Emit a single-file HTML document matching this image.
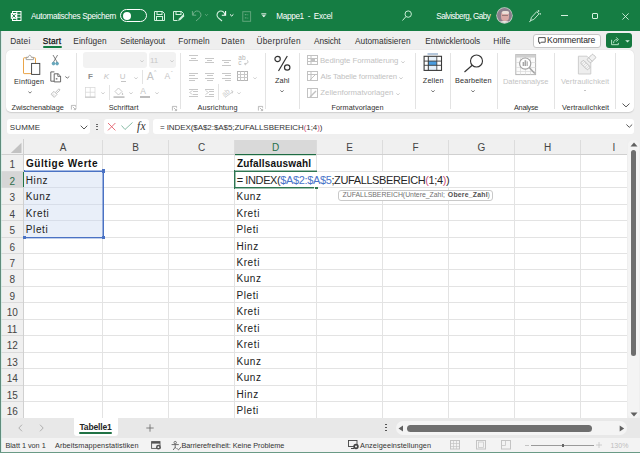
<!DOCTYPE html>
<html><head><meta charset="utf-8"><style>
html,body{margin:0;padding:0;width:640px;height:453px;overflow:hidden;background:#efefef}
body{position:relative;font-family:"Liberation Sans", sans-serif}
.t{position:absolute;white-space:nowrap;font-family:"Liberation Sans", sans-serif}
svg{overflow:visible}
</style></head><body>
<div style="position:absolute;left:0px;top:0px;width:640px;height:453px;background:#efefef"></div>
<div style="position:absolute;left:0px;top:0px;width:640px;height:31px;background:#157d43"></div>
<svg style="position:absolute;left:10px;top:10px;" width="12" height="12" viewBox="0 0 12 12"><rect x="2.5" y="1.5" width="8.5" height="9" fill="none" stroke="#fff" stroke-width="1"/><line x1="6.8" y1="1.5" x2="6.8" y2="10.5" stroke="#fff"/><line x1="2.5" y1="4.3" x2="11" y2="4.3" stroke="#fff" stroke-width="0.8"/><line x1="2.5" y1="7.3" x2="11" y2="7.3" stroke="#fff" stroke-width="0.8"/><rect x="0.8" y="3" width="6.2" height="5.8" fill="#fff"/><path d="M2.3 4.2l3.2 3.4M5.5 4.2l-3.2 3.4" stroke="#157d43" stroke-width="1"/></svg>
<div class="t" style="left:31.00px;top:11.74px;font-size:8.2px;line-height:9.43px;color:#fff;font-weight:normal;letter-spacing:-0.339px;">Automatisches Speichern</div>
<div style="position:absolute;left:120px;top:9px;width:27px;height:13px;border:1px solid #fff;border-radius:7px;box-sizing:border-box"></div>
<div style="position:absolute;left:123px;top:11.5px;width:8px;height:8px;background:#fff;border-radius:50%"></div>
<svg style="position:absolute;left:153px;top:10px;" width="13" height="12" viewBox="0 0 13 12"><path d="M1.5 1.5h8l2 2v7h-10z" fill="none" stroke="#d4f1df" stroke-width="1"/><rect x="4" y="1.5" width="5" height="3" fill="none" stroke="#d4f1df"/><rect x="3.5" y="6.5" width="6" height="4" fill="none" stroke="#d4f1df"/></svg>
<svg style="position:absolute;left:172px;top:10px;" width="13" height="12" viewBox="0 0 13 12"><path d="M1.5 1.5h8l2 2v3 M5.5 10.5h-4v-9" fill="none" stroke="#d4f1df" stroke-width="1"/><rect x="4" y="1.5" width="5" height="3" fill="none" stroke="#d4f1df"/><path d="M6 11l1-2.5 4-4 1.5 1.5-4 4z" fill="#d4f1df"/></svg>
<svg style="position:absolute;left:0;top:0" width="640" height="31" viewBox="0 0 640 31"><path d="M193.2 15 A3.9 3.9 0 1 1 199.9 17.6 L196 21" fill="none" stroke="#6cae87" stroke-width="1"/><path d="M192.4 11 V15.2 H196.2" fill="none" stroke="#6cae87" stroke-width="1"/><path d="M205.2 14.3 l1.3 1.3 1.3 -1.3" fill="none" stroke="#6cae87" stroke-width="0.9"/><path d="M224.8 15 A3.9 3.9 0 1 0 218.1 17.6 L222 21" fill="none" stroke="#d4f1df" stroke-width="1.1"/><path d="M225.6 11 V15.2 H221.8" fill="none" stroke="#fff" stroke-width="1.1"/><path d="M230 14.4 l1.7 1.6 1.7 -1.6" fill="none" stroke="#fff" stroke-width="1"/></svg>
<svg style="position:absolute;left:241.5px;top:10.5px;" width="10" height="11" viewBox="0 0 10 11"><rect x="0.8" y="0.7" width="7.8" height="9.6" fill="none" stroke="#5fa57b" stroke-width="1"/><path d="M2.8 3.6h1.6M2.8 6.9h1.6" stroke="#5fa57b" stroke-width="1.3"/><path d="M4.8 3.8h1.6M4.8 7.1h1.6" stroke="#5fa57b" stroke-width="0.7"/></svg>
<svg style="position:absolute;left:261px;top:13px;" width="6" height="5" viewBox="0 0 6 5"><line x1="0.3" y1="0.9" x2="5.3" y2="0.9" stroke="#fff" stroke-width="1"/><path d="M0.8 2.3h4l-2 2z" fill="#fff"/></svg>
<div class="t" style="left:276.34px;top:11.74px;font-size:8.2px;line-height:9.43px;color:#fff;font-weight:normal;letter-spacing:-0.354px;">Mappe1&nbsp; -&nbsp; Excel</div>
<svg style="position:absolute;left:401px;top:10px;" width="12" height="12" viewBox="0 0 12 12"><circle cx="7.2" cy="4.1" r="3.2" fill="none" stroke="#c8eed6" stroke-width="1"/><line x1="5" y1="6.5" x2="1.5" y2="10.5" stroke="#c8eed6" stroke-width="1"/></svg>
<div class="t" style="left:436.33px;top:11.74px;font-size:8.2px;line-height:9.43px;color:#fff;font-weight:normal;letter-spacing:-0.518px;">Salvisberg, Gaby</div>
<div style="position:absolute;left:496.8px;top:8.4px;width:15px;height:15px;border-radius:50%;background:#8a7f8c;overflow:hidden;box-shadow:0 0 0 0.7px #c9d6cc"><div style="position:absolute;left:4.6px;top:3px;width:7.6px;height:10px;border-radius:45%;background:#d9a9a6"></div><div style="position:absolute;left:4.8px;top:2.6px;width:7px;height:3.2px;border-radius:40% 40% 20% 20%;background:#eadfd8"></div><div style="position:absolute;left:5.6px;top:6.6px;width:5.6px;height:1px;background:#9a7a78"></div><div style="position:absolute;left:2px;top:12.6px;width:11px;height:4px;border-radius:40% 40% 0 0;background:#e4e6e0"></div></div>
<svg style="position:absolute;left:528px;top:9px;" width="14" height="14" viewBox="0 0 14 14"><path d="M2.5 11.5l1-3.2 5.2-5.6 2.3 2.1-5.2 5.7z" fill="none" stroke="#d4f1df" stroke-width="0.9"/><path d="M1.2 12.8l2-1.2" stroke="#d4f1df" stroke-width="0.9"/><path d="M10.5 1v2M9.5 2h2M12.3 4.2v1.4M11.6 4.9h1.4" stroke="#d4f1df" stroke-width="0.7"/></svg>
<div style="position:absolute;left:561px;top:15px;width:6.5px;height:0.9px;background:#d4f1df"></div>
<div style="position:absolute;left:591.5px;top:12.5px;width:6.5px;height:6.5px;border:0.9px solid #d4f1df;box-sizing:border-box;border-radius:1px"></div>
<svg style="position:absolute;left:622px;top:12.5px;" width="7" height="7" viewBox="0 0 7 7"><path d="M0.4 0.4l6.2 6.2M6.6 0.4l-6.2 6.2" stroke="#d4f1df" stroke-width="0.9"/></svg>
<div class="t" style="left:10.14px;top:36.65px;font-size:8.3px;line-height:9.54px;color:#303030;font-weight:normal;letter-spacing:0.191px;">Datei</div>
<div class="t" style="left:42.73px;top:36.65px;font-size:8.3px;line-height:9.54px;color:#111;font-weight:normal;letter-spacing:0.200px;-webkit-text-stroke:0.25px #111">Start</div>
<div class="t" style="left:73.34px;top:36.65px;font-size:8.3px;line-height:9.54px;color:#303030;font-weight:normal;letter-spacing:0.066px;">Einfügen</div>
<div class="t" style="left:120.13px;top:36.65px;font-size:8.3px;line-height:9.54px;color:#303030;font-weight:normal;letter-spacing:-0.067px;">Seitenlayout</div>
<div class="t" style="left:178.34px;top:36.65px;font-size:8.3px;line-height:9.54px;color:#303030;font-weight:normal;letter-spacing:0.131px;">Formeln</div>
<div class="t" style="left:221.34px;top:36.65px;font-size:8.3px;line-height:9.54px;color:#303030;font-weight:normal;letter-spacing:0.271px;">Daten</div>
<div class="t" style="left:256.38px;top:36.65px;font-size:8.3px;line-height:9.54px;color:#303030;font-weight:normal;letter-spacing:0.296px;">Überprüfen</div>
<div class="t" style="left:314.00px;top:36.65px;font-size:8.3px;line-height:9.54px;color:#303030;font-weight:normal;letter-spacing:-0.107px;">Ansicht</div>
<div class="t" style="left:355.00px;top:36.65px;font-size:8.3px;line-height:9.54px;color:#303030;font-weight:normal;letter-spacing:0.014px;">Automatisieren</div>
<div class="t" style="left:425.34px;top:36.65px;font-size:8.3px;line-height:9.54px;color:#303030;font-weight:normal;letter-spacing:-0.029px;">Entwicklertools</div>
<div class="t" style="left:493.34px;top:36.65px;font-size:8.3px;line-height:9.54px;color:#303030;font-weight:normal;letter-spacing:0.109px;">Hilfe</div>
<div style="position:absolute;left:43px;top:46.3px;width:19px;height:1.6px;background:#157d43;border-radius:1px"></div>
<div style="position:absolute;left:533px;top:34px;width:68px;height:14px;background:#fff;border:1px solid #c6c6c6;border-radius:3px;box-sizing:border-box"></div>
<svg style="position:absolute;left:537.5px;top:37px;" width="8" height="8" viewBox="0 0 8 8"><path d="M0.6 0.6h6.6v4.6h-4l-1.6 1.6v-1.6h-1z" fill="none" stroke="#333" stroke-width="0.85"/></svg>
<div class="t" style="left:547.11px;top:36.38px;font-size:8.6px;line-height:9.89px;color:#262626;font-weight:normal;letter-spacing:-0.107px;">Kommentare</div>
<div style="position:absolute;left:606.2px;top:33.2px;width:26.3px;height:14.6px;background:#15793f;border-radius:3px"></div>
<svg style="position:absolute;left:610px;top:36px;" width="11" height="10" viewBox="0 0 11 10"><path d="M1.6 3.8v4.9h6.7v-1.8" fill="none" stroke="#b4e6c6" stroke-width="1"/><path d="M3.6 7.2c0-2.6 1.4-3.6 3.6-3.6" fill="none" stroke="#b4e6c6" stroke-width="1"/><path d="M6.3 1.4l2 2.2-2 2" fill="none" stroke="#b4e6c6" stroke-width="1"/></svg>
<svg style="position:absolute;left:624.5px;top:40.3px;" width="5" height="3" viewBox="0 0 5 3"><path d="M0.2 0.3h4.6l-2.3 2.2z" fill="#cfeedd"/></svg>
<div style="position:absolute;left:6px;top:50px;width:628px;height:62.4px;background:#fff;border-radius:5px;box-shadow:0 0.6px 1.2px rgba(0,0,0,0.14)"></div>
<svg style="position:absolute;left:22px;top:54px;" width="20" height="22" viewBox="0 0 20 22"><rect x="1.5" y="3.8" width="12" height="15.8" rx="0.6" fill="none" stroke="#eaa549" stroke-width="1"/><path d="M4.2 5.6v-2.3h2c0.2-1.2 0.9-2 1.6-2s1.4 0.8 1.6 2h2v2.3z" fill="#fff" stroke="#8c8c8c" stroke-width="0.8"/><rect x="9.6" y="9.4" width="8.2" height="11" fill="#fff" stroke="#3a3a3a" stroke-width="0.9"/></svg>
<div class="t" style="left:14.02px;top:77.77px;font-size:7.3px;line-height:8.39px;color:#303030;font-weight:normal;letter-spacing:0.194px;">Einfügen</div>
<svg style="position:absolute;left:27.5px;top:90.5px;" width="4" height="3" viewBox="0 0 4 3"><path d="M0.4 0.6l1.6 1.5 1.6-1.5" fill="none" stroke="#555" stroke-width="0.8"/></svg>
<svg style="position:absolute;left:51px;top:54px;" width="9" height="12" viewBox="0 0 9 12"><path d="M2 1l4.4 7.6M6.6 1l-4.4 7.6" stroke="#666" stroke-width="0.8" fill="none"/><circle cx="2.5" cy="9.6" r="1.4" fill="#6aa8bd" stroke="#3f8fa8" stroke-width="0.6"/><circle cx="6.1" cy="9.6" r="1.4" fill="#6aa8bd" stroke="#3f8fa8" stroke-width="0.6"/></svg>
<svg style="position:absolute;left:49.5px;top:70.5px;" width="12" height="12" viewBox="0 0 12 12"><path d="M4 10.2h-3.2v-9.3h3.6" fill="none" stroke="#444" stroke-width="0.8"/><path d="M4.2 2.8h4l2.4 2.4v5.7h-6.4z" fill="#fff" stroke="#444" stroke-width="0.8"/><path d="M7.8 2.8v2.6h2.6" fill="none" stroke="#444" stroke-width="0.7"/><rect x="5.8" y="7" width="1.6" height="1.6" fill="#888"/></svg>
<svg style="position:absolute;left:64.8px;top:76px;" width="4.5" height="3" viewBox="0 0 4.5 3"><path d="M0.3 0.5l2 1.6 2-1.6" fill="none" stroke="#555" stroke-width="0.8"/></svg>
<svg style="position:absolute;left:49.5px;top:87.5px;" width="11" height="10" viewBox="0 0 11 10"><path d="M1 6.2l3-2.8 3 3-2.8 3z" fill="none" stroke="#bababa" stroke-width="0.9"/><path d="M2 7.4l2-1.6M3 8.3l1.8-1.6" stroke="#c8c8c8" stroke-width="0.6"/><path d="M5.3 4.6l3.6-3.8 1.2 1.2-3.8 3.6" fill="none" stroke="#bababa" stroke-width="0.9"/></svg>
<div class="t" style="left:11.48px;top:103.77px;font-size:7.3px;line-height:8.39px;color:#303030;font-weight:normal;letter-spacing:-0.038px;">Zwischenablage</div>
<svg style="position:absolute;left:71px;top:105.0px;" width="5" height="5" viewBox="0 0 5 5"><path d="M0.4 4.6v-4.2h4.2v1.4" fill="none" stroke="#a0a0a0" stroke-width="0.7"/><path d="M1.8 1.8l2.6 2.6M4.6 2.8v1.8H2.8" fill="none" stroke="#a0a0a0" stroke-width="0.7"/></svg>
<div style="position:absolute;left:76px;top:53px;width:1px;height:56px;background:#e3e3e3"></div>
<div style="position:absolute;left:83px;top:52px;width:63.5px;height:15.5px;background:#f2f2f2;border-radius:3px"></div>
<svg style="position:absolute;left:140.3px;top:59.8px;" width="4" height="3" viewBox="0 0 4 3"><path d="M0.3 0.4l1.7 1.5 1.7-1.5" fill="none" stroke="#c4c4c4" stroke-width="0.8"/></svg>
<div style="position:absolute;left:148.5px;top:52px;width:27px;height:15.5px;background:#f2f2f2;border-radius:3px"></div>
<div class="t" style="left:149.90px;top:55.83px;font-size:8px;line-height:9.20px;color:#c8c8c8;font-weight:normal;">11</div>
<svg style="position:absolute;left:170.3px;top:59.8px;" width="4" height="3" viewBox="0 0 4 3"><path d="M0.3 0.4l1.7 1.5 1.7-1.5" fill="none" stroke="#c4c4c4" stroke-width="0.8"/></svg>
<div class="t" style="left:88.08px;top:72.13px;font-size:8px;line-height:9.20px;color:#8c8c8c;font-weight:bold;">F</div>
<div class="t" style="left:103.76px;top:72.13px;font-size:8px;line-height:9.20px;color:#c4c4c4;font-weight:normal;font-style:italic">K</div>
<div class="t" style="left:119.70px;top:72.13px;font-size:8px;line-height:9.20px;color:#c4c4c4;font-weight:normal;">U</div>
<div style="position:absolute;left:120.5px;top:80.5px;width:5.5px;height:0.8px;background:#c4c4c4"></div>
<svg style="position:absolute;left:133.8px;top:76.8px;" width="4" height="3" viewBox="0 0 4 3"><path d="M0.3 0.4l1.7 1.5 1.7-1.5" fill="none" stroke="#c4c4c4" stroke-width="0.8"/></svg>
<div style="position:absolute;left:142px;top:70px;width:1px;height:14px;background:#e3e3e3"></div>
<div class="t" style="left:146.80px;top:70.02px;font-size:10.5px;line-height:12.07px;color:#c4c4c4;font-weight:normal;">A</div>
<div class="t" style="left:153.97px;top:69.89px;font-size:5px;line-height:5.75px;color:#c4c4c4;font-weight:normal;">^</div>
<div class="t" style="left:164.40px;top:71.87px;font-size:8.5px;line-height:9.77px;color:#c4c4c4;font-weight:normal;">A</div>
<div class="t" style="left:171.00px;top:70.89px;font-size:5px;line-height:5.75px;color:#c4c4c4;font-weight:normal;">ˇ</div>
<svg style="position:absolute;left:85px;top:87px;" width="11" height="11" viewBox="0 0 11 11"><rect x="0.5" y="0.5" width="9.5" height="9.5" fill="none" stroke="#d6d6d6" stroke-width="0.7"/><line x1="5.25" y1="0.5" x2="5.25" y2="10" stroke="#d6d6d6" stroke-width="0.7"/><line x1="0.5" y1="5.25" x2="10" y2="5.25" stroke="#d6d6d6" stroke-width="0.7"/><line x1="0" y1="10.2" x2="10.5" y2="10.2" stroke="#bdbdbd" stroke-width="0.9"/></svg>
<svg style="position:absolute;left:100.8px;top:92.3px;" width="4" height="3" viewBox="0 0 4 3"><path d="M0.3 0.4l1.7 1.5 1.7-1.5" fill="none" stroke="#c4c4c4" stroke-width="0.8"/></svg>
<div style="position:absolute;left:109px;top:85px;width:1px;height:15px;background:#e3e3e3"></div>
<svg style="position:absolute;left:113px;top:87px;" width="12" height="11" viewBox="0 0 12 11"><path d="M2 4.5l3.5-3.5 3.5 3.5-3.5 3.5z" fill="none" stroke="#c4c4c4" stroke-width="0.9"/><path d="M9.5 5.5c1 1.5 1 2.5 0 2.5s-1-1 0-2.5z" fill="#c4c4c4"/><rect x="0.5" y="9.3" width="11" height="1.6" fill="#bdbdbd"/></svg>
<svg style="position:absolute;left:128.60000000000002px;top:92.3px;" width="4" height="3" viewBox="0 0 4 3"><path d="M0.3 0.4l1.7 1.5 1.7-1.5" fill="none" stroke="#c4c4c4" stroke-width="0.8"/></svg>
<div class="t" style="left:140.30px;top:86.97px;font-size:8.5px;line-height:9.77px;color:#c4c4c4;font-weight:normal;">A</div>
<div style="position:absolute;left:139.5px;top:96px;width:10px;height:1.6px;background:#bdbdbd"></div>
<svg style="position:absolute;left:154.8px;top:92.3px;" width="4" height="3" viewBox="0 0 4 3"><path d="M0.3 0.4l1.7 1.5 1.7-1.5" fill="none" stroke="#c4c4c4" stroke-width="0.8"/></svg>
<div class="t" style="left:108.67px;top:103.77px;font-size:7.3px;line-height:8.39px;color:#303030;font-weight:normal;letter-spacing:0.063px;">Schriftart</div>
<svg style="position:absolute;left:172px;top:105.5px;" width="5" height="5" viewBox="0 0 5 5"><path d="M0.4 4.6v-4.2h4.2v1.4" fill="none" stroke="#a0a0a0" stroke-width="0.7"/><path d="M1.8 1.8l2.6 2.6M4.6 2.8v1.8H2.8" fill="none" stroke="#a0a0a0" stroke-width="0.7"/></svg>
<div style="position:absolute;left:180px;top:53px;width:1px;height:56px;background:#e3e3e3"></div>
<div style="position:absolute;left:189px;top:55px;width:9px;height:1px;background:#c8c8c8"></div>
<div style="position:absolute;left:191px;top:57.5px;width:5px;height:1px;background:#c8c8c8"></div>
<div style="position:absolute;left:189px;top:60px;width:9px;height:1px;background:#c8c8c8"></div>
<div style="position:absolute;left:205px;top:57.5px;width:9px;height:1px;background:#c8c8c8"></div>
<div style="position:absolute;left:207px;top:59.5px;width:5px;height:1px;background:#c8c8c8"></div>
<div style="position:absolute;left:205px;top:62px;width:9px;height:1px;background:#c8c8c8"></div>
<div style="position:absolute;left:222px;top:59.5px;width:9px;height:1px;background:#c8c8c8"></div>
<div style="position:absolute;left:224px;top:62px;width:5px;height:1px;background:#c8c8c8"></div>
<div style="position:absolute;left:222px;top:64.5px;width:9px;height:1px;background:#c8c8c8"></div>
<svg style="position:absolute;left:238px;top:54px;" width="11" height="12" viewBox="0 0 11 12"><text x="0.3" y="5.6" font-size="6.5" font-family="Liberation Sans" fill="#b5b5b5">ab</text><text x="0.3" y="11.2" font-size="6.5" font-family="Liberation Sans" fill="#b5b5b5">c</text><path d="M9.2 6.2c1.6 1.6 0.6 3.8-2.6 3.8M7.8 8.8l-1.2 1.2 1.2 1" fill="none" stroke="#b5b5b5" stroke-width="0.8"/></svg>
<div style="position:absolute;left:189px;top:72.5px;width:9px;height:1px;background:#c8c8c8"></div>
<div style="position:absolute;left:189px;top:75px;width:6px;height:1px;background:#c8c8c8"></div>
<div style="position:absolute;left:189px;top:77.5px;width:9px;height:1px;background:#c8c8c8"></div>
<div style="position:absolute;left:189px;top:80px;width:6px;height:1px;background:#c8c8c8"></div>
<div style="position:absolute;left:205px;top:72.5px;width:9px;height:1px;background:#c8c8c8"></div>
<div style="position:absolute;left:206.5px;top:75px;width:6px;height:1px;background:#c8c8c8"></div>
<div style="position:absolute;left:205px;top:77.5px;width:9px;height:1px;background:#c8c8c8"></div>
<div style="position:absolute;left:206.5px;top:80px;width:6px;height:1px;background:#c8c8c8"></div>
<div style="position:absolute;left:222px;top:72.5px;width:9px;height:1px;background:#c8c8c8"></div>
<div style="position:absolute;left:225px;top:75px;width:6px;height:1px;background:#c8c8c8"></div>
<div style="position:absolute;left:222px;top:77.5px;width:9px;height:1px;background:#c8c8c8"></div>
<div style="position:absolute;left:225px;top:80px;width:6px;height:1px;background:#c8c8c8"></div>
<svg style="position:absolute;left:237px;top:71px;" width="11" height="10" viewBox="0 0 11 10"><rect x="0.5" y="0.5" width="10" height="9" fill="none" stroke="#b5b5b5"/><line x1="0.5" y1="3.5" x2="10.5" y2="3.5" stroke="#c8c8c8"/><line x1="0.5" y1="6.5" x2="10.5" y2="6.5" stroke="#c8c8c8"/><line x1="3.5" y1="0.5" x2="3.5" y2="9.5" stroke="#c8c8c8"/><line x1="7.5" y1="0.5" x2="7.5" y2="9.5" stroke="#c8c8c8"/></svg>
<svg style="position:absolute;left:252.8px;top:76.8px;" width="4" height="3" viewBox="0 0 4 3"><path d="M0.3 0.4l1.7 1.5 1.7-1.5" fill="none" stroke="#c8c8c8" stroke-width="0.8"/></svg>
<div style="position:absolute;left:189px;top:88.5px;width:9px;height:1px;background:#c8c8c8"></div>
<div style="position:absolute;left:193px;top:91px;width:5px;height:1px;background:#c8c8c8"></div>
<div style="position:absolute;left:193px;top:93.5px;width:5px;height:1px;background:#c8c8c8"></div>
<div style="position:absolute;left:189px;top:96px;width:9px;height:1px;background:#c8c8c8"></div>
<svg style="position:absolute;left:189px;top:90px;" width="4" height="5" viewBox="0 0 4 5"><path d="M3.5 0.5l-3 2 3 2" fill="none" stroke="#c8c8c8" stroke-width="0.8"/></svg>
<div style="position:absolute;left:205px;top:88.5px;width:9px;height:1px;background:#c8c8c8"></div>
<div style="position:absolute;left:209px;top:91px;width:5px;height:1px;background:#c8c8c8"></div>
<div style="position:absolute;left:209px;top:93.5px;width:5px;height:1px;background:#c8c8c8"></div>
<div style="position:absolute;left:205px;top:96px;width:9px;height:1px;background:#c8c8c8"></div>
<svg style="position:absolute;left:205px;top:90px;" width="4" height="5" viewBox="0 0 4 5"><path d="M0.5 0.5l3 2-3 2" fill="none" stroke="#c8c8c8" stroke-width="0.8"/></svg>
<div style="position:absolute;left:218px;top:84px;width:1px;height:16px;background:#e3e3e3"></div>
<svg style="position:absolute;left:222px;top:87px;" width="12" height="11" viewBox="0 0 12 11"><text x="0" y="8" font-size="7" font-family="Liberation Sans" fill="#c8c8c8" transform="rotate(-40 4 6)">ab</text><path d="M3 10.5l8-6M9 3.5l2 1-1 2" fill="none" stroke="#c8c8c8" stroke-width="0.8"/></svg>
<svg style="position:absolute;left:236.8px;top:92.3px;" width="4" height="3" viewBox="0 0 4 3"><path d="M0.3 0.4l1.7 1.5 1.7-1.5" fill="none" stroke="#c8c8c8" stroke-width="0.8"/></svg>
<div class="t" style="left:197.50px;top:103.77px;font-size:7.3px;line-height:8.39px;color:#303030;font-weight:normal;letter-spacing:0.143px;">Ausrichtung</div>
<svg style="position:absolute;left:258px;top:105.5px;" width="5" height="5" viewBox="0 0 5 5"><path d="M0.4 4.6v-4.2h4.2v1.4" fill="none" stroke="#a0a0a0" stroke-width="0.7"/><path d="M1.8 1.8l2.6 2.6M4.6 2.8v1.8H2.8" fill="none" stroke="#a0a0a0" stroke-width="0.7"/></svg>
<div style="position:absolute;left:265px;top:53px;width:1px;height:56px;background:#e3e3e3"></div>
<svg style="position:absolute;left:273px;top:55px;" width="19" height="17" viewBox="0 0 19 17"><circle cx="4.6" cy="4" r="2.7" fill="none" stroke="#333" stroke-width="1.2"/><circle cx="14.2" cy="12.5" r="2.7" fill="none" stroke="#333" stroke-width="1.2"/><line x1="14.3" y1="1" x2="5.5" y2="16" stroke="#333" stroke-width="1.2"/></svg>
<div class="t" style="left:274.98px;top:76.77px;font-size:7.3px;line-height:8.39px;color:#303030;font-weight:normal;letter-spacing:0.098px;">Zahl</div>
<svg style="position:absolute;left:280.3px;top:89.6px;" width="4" height="3" viewBox="0 0 4 3"><path d="M0.3 0.4l1.7 1.5 1.7-1.5" fill="none" stroke="#555" stroke-width="0.8"/></svg>
<div style="position:absolute;left:299px;top:53px;width:1px;height:56px;background:#e3e3e3"></div>
<svg style="position:absolute;left:307px;top:55px;" width="12" height="10" viewBox="0 0 12 10"><rect x="0.5" y="0.5" width="10" height="9" fill="none" stroke="#c2c2c2"/><line x1="0.5" y1="3.5" x2="10.5" y2="3.5" stroke="#c2c2c2"/><line x1="0.5" y1="6.5" x2="10.5" y2="6.5" stroke="#c2c2c2"/><line x1="4" y1="0.5" x2="4" y2="9.5" stroke="#c2c2c2"/><rect x="4" y="3.5" width="4" height="3" fill="#c2c2c2"/></svg>
<div class="t" style="left:319.98px;top:56.81px;font-size:7.8px;line-height:8.97px;color:#c2c2c2;font-weight:normal;letter-spacing:-0.045px;">Bedingte Formatierung</div>
<svg style="position:absolute;left:400.5px;top:60.599999999999994px;" width="4" height="3" viewBox="0 0 4 3"><path d="M0.3 0.4l1.7 1.5 1.7-1.5" fill="none" stroke="#c2c2c2" stroke-width="0.8"/></svg>
<svg style="position:absolute;left:307px;top:71px;" width="12" height="10" viewBox="0 0 12 10"><rect x="0.5" y="0.5" width="10" height="9" fill="none" stroke="#c2c2c2"/><line x1="0.5" y1="3.5" x2="10.5" y2="3.5" stroke="#c2c2c2"/><line x1="4" y1="0.5" x2="4" y2="9.5" stroke="#c2c2c2"/><path d="M3 9l6-6" stroke="#c2c2c2"/></svg>
<div class="t" style="left:320.60px;top:73.01px;font-size:7.8px;line-height:8.97px;color:#c2c2c2;font-weight:normal;letter-spacing:-0.123px;">Als Tabelle formatieren</div>
<svg style="position:absolute;left:399.1px;top:76.8px;" width="4" height="3" viewBox="0 0 4 3"><path d="M0.3 0.4l1.7 1.5 1.7-1.5" fill="none" stroke="#c2c2c2" stroke-width="0.8"/></svg>
<svg style="position:absolute;left:307px;top:88px;" width="12" height="10" viewBox="0 0 12 10"><rect x="0.5" y="0.5" width="10" height="9" fill="none" stroke="#c2c2c2"/><line x1="4" y1="0.5" x2="4" y2="9.5" stroke="#c2c2c2"/><path d="M3 9l6-6" stroke="#c2c2c2" stroke-width="1.5"/></svg>
<div class="t" style="left:320.37px;top:89.11px;font-size:7.8px;line-height:8.97px;color:#c2c2c2;font-weight:normal;letter-spacing:-0.013px;">Zellenformatvorlagen</div>
<svg style="position:absolute;left:395.6px;top:92.8px;" width="4" height="3" viewBox="0 0 4 3"><path d="M0.3 0.4l1.7 1.5 1.7-1.5" fill="none" stroke="#c2c2c2" stroke-width="0.8"/></svg>
<div class="t" style="left:331.42px;top:103.77px;font-size:7.3px;line-height:8.39px;color:#303030;font-weight:normal;letter-spacing:0.074px;">Formatvorlagen</div>
<div style="position:absolute;left:415px;top:53px;width:1px;height:56px;background:#e3e3e3"></div>
<svg style="position:absolute;left:423px;top:52px;" width="20" height="20" viewBox="0 0 20 20"><line x1="4.5" y1="2" x2="15" y2="2" stroke="#6b8fb8" stroke-width="1"/><rect x="5.3" y="4.3" width="8.5" height="14.1" fill="#e6f1fb"/><rect x="5.3" y="9.1" width="8.5" height="4.2" fill="#4a9de0"/><rect x="1.1" y="4.3" width="17.4" height="14.1" fill="none" stroke="#3a3a3a" stroke-width="1.1"/><line x1="5.3" y1="4.3" x2="5.3" y2="18.4" stroke="#3a3a3a" stroke-width="1"/><line x1="13.8" y1="4.3" x2="13.8" y2="18.4" stroke="#3a3a3a" stroke-width="0.8"/><line x1="1.1" y1="9.1" x2="18.5" y2="9.1" stroke="#3a3a3a" stroke-width="0.9"/><line x1="1.1" y1="13.3" x2="18.5" y2="13.3" stroke="#3a3a3a" stroke-width="0.9"/></svg>
<div class="t" style="left:422.78px;top:76.57px;font-size:7.3px;line-height:8.39px;color:#303030;font-weight:normal;letter-spacing:0.160px;">Zellen</div>
<svg style="position:absolute;left:430.8px;top:89.6px;" width="4" height="3" viewBox="0 0 4 3"><path d="M0.3 0.4l1.7 1.5 1.7-1.5" fill="none" stroke="#555" stroke-width="0.8"/></svg>
<div style="position:absolute;left:450px;top:53px;width:1px;height:56px;background:#e3e3e3"></div>
<svg style="position:absolute;left:463px;top:54px;" width="21" height="19" viewBox="0 0 21 19"><circle cx="13.5" cy="7" r="6" fill="none" stroke="#333" stroke-width="1.1"/><line x1="9.2" y1="11.3" x2="1.5" y2="18" stroke="#333" stroke-width="1.2"/></svg>
<div class="t" style="left:455.12px;top:76.57px;font-size:7.3px;line-height:8.39px;color:#303030;font-weight:normal;letter-spacing:0.118px;">Bearbeiten</div>
<svg style="position:absolute;left:471.3px;top:89.6px;" width="4" height="3" viewBox="0 0 4 3"><path d="M0.3 0.4l1.7 1.5 1.7-1.5" fill="none" stroke="#555" stroke-width="0.8"/></svg>
<div style="position:absolute;left:497px;top:53px;width:1px;height:56px;background:#e3e3e3"></div>
<svg style="position:absolute;left:515px;top:54px;" width="22" height="22" viewBox="0 0 22 22"><rect x="0.8" y="0.6" width="19.8" height="20" fill="#fbfbfb" stroke="#b4b4b4" stroke-width="1"/><rect x="0.8" y="0.6" width="19.8" height="3" fill="#cfcfcf"/><path d="M5.5 3.6v17M10.5 3.6v17M15.5 3.6v17M0.8 8.5h19.8M0.8 13.5h19.8M0.8 17.5h19.8" stroke="#d9d9d9" stroke-width="0.7"/><circle cx="10.2" cy="9.6" r="5.6" fill="#fff" stroke="#a2a2a2" stroke-width="1.2"/><rect x="7.6" y="8" width="1.6" height="4" fill="#a6a6a6"/><rect x="9.6" y="6.2" width="1.6" height="5.8" fill="#a6a6a6"/><rect x="11.6" y="7.4" width="1.4" height="4.6" fill="#bdbdbd"/><line x1="14.2" y1="13.6" x2="19.8" y2="19.4" stroke="#a2a2a2" stroke-width="1.4"/></svg>
<div class="t" style="left:503.00px;top:77.59px;font-size:7.5px;line-height:8.62px;color:#c4c4c4;font-weight:normal;letter-spacing:-0.048px;">Datenanalyse</div>
<div class="t" style="left:514.00px;top:103.77px;font-size:7.3px;line-height:8.39px;color:#303030;font-weight:normal;letter-spacing:-0.270px;">Analyse</div>
<div style="position:absolute;left:554px;top:53px;width:1px;height:56px;background:#e3e3e3"></div>
<svg style="position:absolute;left:577px;top:53px;" width="21" height="22" viewBox="0 0 21 22"><path d="M1.4 3.2h8.6l3.8 3.8v14h-12.4z" fill="#eeeeee" stroke="#cacaca" stroke-width="0.9"/><g transform="rotate(45 8.5 12)"><rect x="3.5" y="10" width="10" height="4.2" rx="1.2" fill="#f6f6f6" stroke="#bdbdbd" stroke-width="0.9"/><path d="M5.5 10v4.2M7.5 10v4.2M9.5 10v4.2M11.5 10v4.2" stroke="#c8c8c8" stroke-width="0.6"/></g><g transform="rotate(-45 14.5 5.5)"><rect x="10.5" y="3" width="8" height="5" rx="1" fill="#f2f2f2" stroke="#bdbdbd" stroke-width="0.9"/><line x1="13" y1="3" x2="13" y2="8" stroke="#bdbdbd" stroke-width="0.8"/></g></svg>
<div class="t" style="left:560.96px;top:77.59px;font-size:7.5px;line-height:8.62px;color:#c4c4c4;font-weight:normal;letter-spacing:0.070px;">Vertraulichkeit</div>
<div style="position:absolute;left:584px;top:90px;width:2px;height:0.8px;background:#c4c4c4"></div>
<div class="t" style="left:561.96px;top:103.77px;font-size:7.3px;line-height:8.39px;color:#303030;font-weight:normal;letter-spacing:0.088px;">Vertraulichkeit</div>
<div style="position:absolute;left:615px;top:53px;width:1px;height:56px;background:#e3e3e3"></div>
<svg style="position:absolute;left:622px;top:102.5px;" width="8" height="5" viewBox="0 0 8 5"><path d="M0.5 0.6l3.5 3.3 3.5-3.3" fill="none" stroke="#444" stroke-width="0.9"/></svg>
<div style="position:absolute;left:6.6px;top:119px;width:83.7px;height:15px;background:#fff;border-radius:3px"></div>
<div class="t" style="left:9.84px;top:122.63px;font-size:8px;line-height:9.20px;color:#333;font-weight:normal;letter-spacing:0.130px;">SUMME</div>
<svg style="position:absolute;left:80px;top:125px;" width="8" height="5" viewBox="0 0 8 5"><path d="M0.7 0.7l3.3 3.3 3.3-3.3" fill="none" stroke="#444" stroke-width="0.9"/></svg>
<div style="position:absolute;left:96.3px;top:123.5px;width:1.3px;height:1.3px;background:#555;border-radius:50%"></div>
<div style="position:absolute;left:96.3px;top:126px;width:1.3px;height:1.3px;background:#555;border-radius:50%"></div>
<div style="position:absolute;left:96.3px;top:128.5px;width:1.3px;height:1.3px;background:#555;border-radius:50%"></div>
<div style="position:absolute;left:104.2px;top:119px;width:44.5px;height:15px;background:#fff;border-radius:3px"></div>
<svg style="position:absolute;left:107px;top:122px;" width="10" height="10" viewBox="0 0 10 10"><path d="M1 1l7.4 7.4M8.4 1l-7.4 7.4" stroke="#e35d6a" stroke-width="0.9" fill="none"/></svg>
<svg style="position:absolute;left:121px;top:122px;" width="12" height="9" viewBox="0 0 12 9"><path d="M0.5 3.5l3.5 4 7.5-7" stroke="#7cb59d" stroke-width="0.9" fill="none"/></svg>
<div style="position:absolute;left:137px;top:119px;width:12px;height:15px;font-family:&quot;Liberation Serif&quot;,serif;font-style:italic;font-size:11.5px;line-height:15px;color:#333;letter-spacing:0.4px;white-space:nowrap">fx</div>
<div style="position:absolute;left:153.3px;top:119px;width:480.5px;height:15px;background:#fff;border-radius:3px"></div>
<div class="t" style="left:159.90px;top:122.63px;font-size:8px;line-height:9.20px;color:#333;font-weight:normal;letter-spacing:-0.070px;">= INDEX($A$2:$A$5;ZUFALLSBEREICH<span style="color:#d0507a">(</span>1;4<span style="color:#d0507a">)</span>)</div>
<svg style="position:absolute;left:626px;top:124.2px;" width="7" height="4" viewBox="0 0 7 4"><path d="M0.4 0.5l2.9 2.8 2.9-2.8" fill="none" stroke="#444" stroke-width="0.9"/></svg>
<div style="position:absolute;left:24px;top:155px;width:603px;height:263px;background:#fff"></div>
<div style="position:absolute;left:1px;top:139px;width:626px;height:15px;background:#f0f0f0"></div>
<div style="position:absolute;left:1px;top:155px;width:22px;height:263px;background:#f0f0f0"></div>
<div style="position:absolute;left:235px;top:140px;width:81px;height:14px;background:#d9d9d9"></div>
<div style="position:absolute;left:1px;top:172px;width:22px;height:15px;background:#d6d6d6"></div>
<div style="position:absolute;left:24px;top:171px;width:603px;height:1px;background:#e3e3e3"></div>
<div style="position:absolute;left:1px;top:171px;width:22px;height:1px;background:#dadada"></div>
<div style="position:absolute;left:24px;top:187px;width:603px;height:1px;background:#e3e3e3"></div>
<div style="position:absolute;left:1px;top:187px;width:22px;height:1px;background:#dadada"></div>
<div style="position:absolute;left:24px;top:204px;width:603px;height:1px;background:#e3e3e3"></div>
<div style="position:absolute;left:1px;top:204px;width:22px;height:1px;background:#dadada"></div>
<div style="position:absolute;left:24px;top:220px;width:603px;height:1px;background:#e3e3e3"></div>
<div style="position:absolute;left:1px;top:220px;width:22px;height:1px;background:#dadada"></div>
<div style="position:absolute;left:24px;top:237px;width:603px;height:1px;background:#e3e3e3"></div>
<div style="position:absolute;left:1px;top:237px;width:22px;height:1px;background:#dadada"></div>
<div style="position:absolute;left:24px;top:253px;width:603px;height:1px;background:#e3e3e3"></div>
<div style="position:absolute;left:1px;top:253px;width:22px;height:1px;background:#dadada"></div>
<div style="position:absolute;left:24px;top:269px;width:603px;height:1px;background:#e3e3e3"></div>
<div style="position:absolute;left:1px;top:269px;width:22px;height:1px;background:#dadada"></div>
<div style="position:absolute;left:24px;top:286px;width:603px;height:1px;background:#e3e3e3"></div>
<div style="position:absolute;left:1px;top:286px;width:22px;height:1px;background:#dadada"></div>
<div style="position:absolute;left:24px;top:302px;width:603px;height:1px;background:#e3e3e3"></div>
<div style="position:absolute;left:1px;top:302px;width:22px;height:1px;background:#dadada"></div>
<div style="position:absolute;left:24px;top:319px;width:603px;height:1px;background:#e3e3e3"></div>
<div style="position:absolute;left:1px;top:319px;width:22px;height:1px;background:#dadada"></div>
<div style="position:absolute;left:24px;top:335px;width:603px;height:1px;background:#e3e3e3"></div>
<div style="position:absolute;left:1px;top:335px;width:22px;height:1px;background:#dadada"></div>
<div style="position:absolute;left:24px;top:352px;width:603px;height:1px;background:#e3e3e3"></div>
<div style="position:absolute;left:1px;top:352px;width:22px;height:1px;background:#dadada"></div>
<div style="position:absolute;left:24px;top:368px;width:603px;height:1px;background:#e3e3e3"></div>
<div style="position:absolute;left:1px;top:368px;width:22px;height:1px;background:#dadada"></div>
<div style="position:absolute;left:24px;top:385px;width:603px;height:1px;background:#e3e3e3"></div>
<div style="position:absolute;left:1px;top:385px;width:22px;height:1px;background:#dadada"></div>
<div style="position:absolute;left:24px;top:401px;width:603px;height:1px;background:#e3e3e3"></div>
<div style="position:absolute;left:1px;top:401px;width:22px;height:1px;background:#dadada"></div>
<div style="position:absolute;left:102px;top:155px;width:1px;height:263px;background:#e3e3e3"></div>
<div style="position:absolute;left:102px;top:140px;width:1px;height:14px;background:#dcdcdc"></div>
<div style="position:absolute;left:168px;top:155px;width:1px;height:263px;background:#e3e3e3"></div>
<div style="position:absolute;left:168px;top:140px;width:1px;height:14px;background:#dcdcdc"></div>
<div style="position:absolute;left:234px;top:155px;width:1px;height:263px;background:#e3e3e3"></div>
<div style="position:absolute;left:234px;top:140px;width:1px;height:14px;background:#dcdcdc"></div>
<div style="position:absolute;left:316px;top:155px;width:1px;height:263px;background:#e3e3e3"></div>
<div style="position:absolute;left:316px;top:140px;width:1px;height:14px;background:#dcdcdc"></div>
<div style="position:absolute;left:382px;top:155px;width:1px;height:263px;background:#e3e3e3"></div>
<div style="position:absolute;left:382px;top:140px;width:1px;height:14px;background:#dcdcdc"></div>
<div style="position:absolute;left:448px;top:155px;width:1px;height:263px;background:#e3e3e3"></div>
<div style="position:absolute;left:448px;top:140px;width:1px;height:14px;background:#dcdcdc"></div>
<div style="position:absolute;left:514px;top:155px;width:1px;height:263px;background:#e3e3e3"></div>
<div style="position:absolute;left:514px;top:140px;width:1px;height:14px;background:#dcdcdc"></div>
<div style="position:absolute;left:580px;top:155px;width:1px;height:263px;background:#e3e3e3"></div>
<div style="position:absolute;left:580px;top:140px;width:1px;height:14px;background:#dcdcdc"></div>
<div style="position:absolute;left:1px;top:154px;width:626px;height:1px;background:#d0d0d0"></div>
<div style="position:absolute;left:23px;top:139px;width:1px;height:279px;background:#d0d0d0"></div>
<svg style="position:absolute;left:10px;top:142px;" width="12" height="11" viewBox="0 0 12 11"><path d="M11.5 0.8v10.2h-10.7z" fill="#c2c2c2"/></svg>
<div class="t" style="left:-137.0px;width:400px;text-align:center;top:141.98px;font-size:10px;line-height:11.50px;color:#444;font-weight:normal;">A</div>
<div class="t" style="left:-64.5px;width:400px;text-align:center;top:141.98px;font-size:10px;line-height:11.50px;color:#444;font-weight:normal;">B</div>
<div class="t" style="left:1.5px;width:400px;text-align:center;top:141.98px;font-size:10px;line-height:11.50px;color:#444;font-weight:normal;">C</div>
<div class="t" style="left:75.5px;width:400px;text-align:center;top:141.98px;font-size:10px;line-height:11.50px;color:#24704a;font-weight:normal;">D</div>
<div class="t" style="left:149.5px;width:400px;text-align:center;top:141.98px;font-size:10px;line-height:11.50px;color:#444;font-weight:normal;">E</div>
<div class="t" style="left:215.5px;width:400px;text-align:center;top:141.98px;font-size:10px;line-height:11.50px;color:#444;font-weight:normal;">F</div>
<div class="t" style="left:281.5px;width:400px;text-align:center;top:141.98px;font-size:10px;line-height:11.50px;color:#444;font-weight:normal;">G</div>
<div class="t" style="left:347.5px;width:400px;text-align:center;top:141.98px;font-size:10px;line-height:11.50px;color:#444;font-weight:normal;">H</div>
<div class="t" style="left:413.79999999999995px;width:400px;text-align:center;top:141.98px;font-size:10px;line-height:11.50px;color:#444;font-weight:normal;">I</div>
<div style="position:absolute;left:235px;top:154px;width:81px;height:1px;background:#1f6a43"></div>
<div style="position:absolute;left:235px;top:155px;width:81px;height:1px;background:#cfe6d8"></div>
<div class="t" style="left:-187.8px;width:400px;text-align:center;top:158.69px;font-size:10px;line-height:11.50px;color:#444;font-weight:normal;">1</div>
<div class="t" style="left:-187.8px;width:400px;text-align:center;top:175.69px;font-size:10px;line-height:11.50px;color:#2f6b4a;font-weight:normal;">2</div>
<div class="t" style="left:-187.8px;width:400px;text-align:center;top:191.69px;font-size:10px;line-height:11.50px;color:#444;font-weight:normal;">3</div>
<div class="t" style="left:-187.8px;width:400px;text-align:center;top:208.69px;font-size:10px;line-height:11.50px;color:#444;font-weight:normal;">4</div>
<div class="t" style="left:-187.8px;width:400px;text-align:center;top:224.69px;font-size:10px;line-height:11.50px;color:#444;font-weight:normal;">5</div>
<div class="t" style="left:-187.8px;width:400px;text-align:center;top:241.69px;font-size:10px;line-height:11.50px;color:#444;font-weight:normal;">6</div>
<div class="t" style="left:-187.8px;width:400px;text-align:center;top:257.69px;font-size:10px;line-height:11.50px;color:#444;font-weight:normal;">7</div>
<div class="t" style="left:-187.8px;width:400px;text-align:center;top:273.69px;font-size:10px;line-height:11.50px;color:#444;font-weight:normal;">8</div>
<div class="t" style="left:-187.8px;width:400px;text-align:center;top:290.69px;font-size:10px;line-height:11.50px;color:#444;font-weight:normal;">9</div>
<div class="t" style="left:-187.8px;width:400px;text-align:center;top:306.69px;font-size:10px;line-height:11.50px;color:#444;font-weight:normal;">10</div>
<div class="t" style="left:-187.8px;width:400px;text-align:center;top:323.69px;font-size:10px;line-height:11.50px;color:#444;font-weight:normal;">11</div>
<div class="t" style="left:-187.8px;width:400px;text-align:center;top:339.69px;font-size:10px;line-height:11.50px;color:#444;font-weight:normal;">12</div>
<div class="t" style="left:-187.8px;width:400px;text-align:center;top:356.69px;font-size:10px;line-height:11.50px;color:#444;font-weight:normal;">13</div>
<div class="t" style="left:-187.8px;width:400px;text-align:center;top:372.69px;font-size:10px;line-height:11.50px;color:#444;font-weight:normal;">14</div>
<div class="t" style="left:-187.8px;width:400px;text-align:center;top:389.69px;font-size:10px;line-height:11.50px;color:#444;font-weight:normal;">15</div>
<div class="t" style="left:-187.8px;width:400px;text-align:center;top:405.69px;font-size:10px;line-height:11.50px;color:#444;font-weight:normal;">16</div>
<div style="position:absolute;left:23px;top:172px;width:1px;height:15px;background:#217346"></div>
<div style="position:absolute;left:24px;top:172px;width:79px;height:65px;background:#e9eff9"></div>
<div style="position:absolute;left:24px;top:187px;width:79px;height:1px;background:#d8dee9"></div>
<div style="position:absolute;left:24px;top:204px;width:79px;height:1px;background:#d8dee9"></div>
<div style="position:absolute;left:24px;top:220px;width:79px;height:1px;background:#d8dee9"></div>
<div style="position:absolute;left:24px;top:171px;width:80px;height:1px;background:#4a72c4"></div>
<div style="position:absolute;left:24px;top:170px;width:80px;height:1px;background:rgba(74,114,196,0.5)"></div>
<div style="position:absolute;left:103px;top:170px;width:1px;height:68px;background:#4a72c4"></div>
<div style="position:absolute;left:102px;top:171px;width:1px;height:67px;background:rgba(74,114,196,0.5)"></div>
<div style="position:absolute;left:24px;top:237px;width:80px;height:1px;background:#4a72c4"></div>
<div style="position:absolute;left:24px;top:238px;width:80px;height:1px;background:rgba(74,114,196,0.35)"></div>
<div style="position:absolute;left:101.5px;top:169.4px;width:3.4px;height:3.4px;background:#4a72c4"></div>
<div style="position:absolute;left:22.6px;top:236px;width:3.4px;height:3.4px;background:#4a72c4"></div>
<div style="position:absolute;left:101.5px;top:236px;width:3.4px;height:3.4px;background:#4a72c4"></div>
<div style="position:absolute;left:23.5px;top:170px;width:1.6px;height:1.6px;background:#4a72c4"></div>
<div class="t" style="left:26.00px;top:158.09px;font-size:10px;line-height:11.50px;color:#111;font-weight:bold;letter-spacing:0.562px;">Gültige Werte</div>
<div class="t" style="left:236.90px;top:158.09px;font-size:10px;line-height:11.50px;color:#111;font-weight:bold;letter-spacing:0.192px;">Zufallsauswahl</div>
<div class="t" style="left:25.80px;top:174.98px;font-size:10px;line-height:11.50px;color:#222;font-weight:normal;letter-spacing:0.6px">Hinz</div>
<div class="t" style="left:25.80px;top:190.98px;font-size:10px;line-height:11.50px;color:#222;font-weight:normal;letter-spacing:0.6px">Kunz</div>
<div class="t" style="left:25.80px;top:207.98px;font-size:10px;line-height:11.50px;color:#222;font-weight:normal;letter-spacing:0.6px">Kreti</div>
<div class="t" style="left:25.80px;top:223.98px;font-size:10px;line-height:11.50px;color:#222;font-weight:normal;letter-spacing:0.6px">Pleti</div>
<div class="t" style="left:236.40px;top:190.98px;font-size:10px;line-height:11.50px;color:#222;font-weight:normal;letter-spacing:0.6px">Kunz</div>
<div class="t" style="left:236.40px;top:207.98px;font-size:10px;line-height:11.50px;color:#222;font-weight:normal;letter-spacing:0.6px">Kreti</div>
<div class="t" style="left:236.40px;top:223.98px;font-size:10px;line-height:11.50px;color:#222;font-weight:normal;letter-spacing:0.6px">Pleti</div>
<div class="t" style="left:236.40px;top:240.98px;font-size:10px;line-height:11.50px;color:#222;font-weight:normal;letter-spacing:0.6px">Hinz</div>
<div class="t" style="left:236.40px;top:256.99px;font-size:10px;line-height:11.50px;color:#222;font-weight:normal;letter-spacing:0.6px">Kreti</div>
<div class="t" style="left:236.40px;top:272.99px;font-size:10px;line-height:11.50px;color:#222;font-weight:normal;letter-spacing:0.6px">Kunz</div>
<div class="t" style="left:236.40px;top:289.99px;font-size:10px;line-height:11.50px;color:#222;font-weight:normal;letter-spacing:0.6px">Pleti</div>
<div class="t" style="left:236.40px;top:305.99px;font-size:10px;line-height:11.50px;color:#222;font-weight:normal;letter-spacing:0.6px">Kreti</div>
<div class="t" style="left:236.40px;top:322.99px;font-size:10px;line-height:11.50px;color:#222;font-weight:normal;letter-spacing:0.6px">Kreti</div>
<div class="t" style="left:236.40px;top:338.99px;font-size:10px;line-height:11.50px;color:#222;font-weight:normal;letter-spacing:0.6px">Kreti</div>
<div class="t" style="left:236.40px;top:355.99px;font-size:10px;line-height:11.50px;color:#222;font-weight:normal;letter-spacing:0.6px">Kunz</div>
<div class="t" style="left:236.40px;top:371.99px;font-size:10px;line-height:11.50px;color:#222;font-weight:normal;letter-spacing:0.6px">Kunz</div>
<div class="t" style="left:236.40px;top:388.99px;font-size:10px;line-height:11.50px;color:#222;font-weight:normal;letter-spacing:0.6px">Hinz</div>
<div class="t" style="left:236.40px;top:404.99px;font-size:10px;line-height:11.50px;color:#222;font-weight:normal;letter-spacing:0.6px">Pleti</div>
<div style="position:absolute;left:236px;top:172px;width:214px;height:15px;background:#fff"></div>
<div style="position:absolute;left:234px;top:171px;width:83px;height:1px;background:#2e7651"></div>
<div style="position:absolute;left:234px;top:170px;width:83px;height:1px;background:rgba(46,118,81,0.45)"></div>
<div style="position:absolute;left:234px;top:170px;width:1px;height:19px;background:#2e7651"></div>
<div style="position:absolute;left:235px;top:172px;width:1px;height:15px;background:rgba(46,118,81,0.45)"></div>
<div style="position:absolute;left:234px;top:187px;width:80px;height:1px;background:#2e7651"></div>
<div style="position:absolute;left:234px;top:188px;width:80px;height:1px;background:rgba(46,118,81,0.45)"></div>
<div style="position:absolute;left:314.8px;top:186.8px;width:3px;height:2.6px;background:#2e7651"></div>
<div class="t" style="left:236.65px;top:174.06px;font-size:11px;line-height:12.65px;color:#262626;font-weight:normal;letter-spacing:-0.381px;">= INDEX(<span style="color:#4a74c9">$A$2:$A$5</span>;ZUFALLSBEREICH<span style="color:#d0507a">(</span>1;4<span style="color:#d0507a">)</span>)</div>
<div style="position:absolute;left:338.3px;top:190.3px;width:154.5px;height:10.5px;background:#fff;border:1px solid #c9c9c9;border-radius:3px;box-sizing:border-box"></div>
<div class="t" style="left:342.49px;top:190.54px;font-size:6.9px;line-height:7.93px;color:#707070;font-weight:normal;letter-spacing:-0.010px;">ZUFALLSBEREICH(Untere_Zahl;</div>
<div class="t" style="left:447.82px;top:190.54px;font-size:6.9px;line-height:7.93px;color:#505050;font-weight:bold;letter-spacing:0.219px;">Obere_Zahl</div>
<div class="t" style="left:487.57px;top:190.54px;font-size:6.9px;line-height:7.93px;color:#707070;font-weight:normal;">)</div>
<div style="position:absolute;left:627.5px;top:139.5px;width:11px;height:279px;background:#f4f4f4;border-radius:5px"></div>
<svg style="position:absolute;left:630px;top:142px;" width="8" height="5" viewBox="0 0 8 5"><path d="M0.5 4.5l3.5-4 3.5 4z" fill="#606060"/></svg>
<div style="position:absolute;left:630.6px;top:150px;width:5.6px;height:206px;background:#6e6e6e;border-radius:3px"></div>
<svg style="position:absolute;left:630px;top:412px;" width="8" height="5" viewBox="0 0 8 5"><path d="M0.5 0.5l3.5 4 3.5-4z" fill="#606060"/></svg>
<div style="position:absolute;left:1px;top:418px;width:639px;height:20px;background:#e8e8e8"></div>
<svg style="position:absolute;left:18px;top:424px;" width="5" height="8" viewBox="0 0 5 8"><path d="M4 0.7l-3.2 3.3 3.2 3.3" fill="none" stroke="#a8a8a8" stroke-width="0.9"/></svg>
<svg style="position:absolute;left:39px;top:424px;" width="5" height="8" viewBox="0 0 5 8"><path d="M1 0.7l3.2 3.3-3.2 3.3" fill="none" stroke="#a8a8a8" stroke-width="0.9"/></svg>
<div style="position:absolute;left:74px;top:418px;width:43.8px;height:18.2px;background:#fff;border-radius:0 0 3px 3px"></div>
<div class="t" style="left:79.42px;top:422.67px;font-size:8.5px;line-height:9.77px;color:#262626;font-weight:bold;letter-spacing:-0.152px;">Tabelle1</div>
<div style="position:absolute;left:79.2px;top:432px;width:32.5px;height:1.5px;background:#217346;border-radius:1px"></div>
<svg style="position:absolute;left:145.5px;top:424px;" width="8" height="8" viewBox="0 0 8 8"><path d="M4 0.3v7.4M0.3 4h7.4" stroke="#666" stroke-width="0.8"/></svg>
<div style="position:absolute;left:385.3px;top:423.5px;width:1.3px;height:1.3px;background:#555"></div>
<div style="position:absolute;left:385.3px;top:426.5px;width:1.3px;height:1.3px;background:#555"></div>
<div style="position:absolute;left:385.3px;top:429.5px;width:1.3px;height:1.3px;background:#555"></div>
<div style="position:absolute;left:396px;top:421px;width:231px;height:14px;background:#f4f4f4;border-radius:7px"></div>
<svg style="position:absolute;left:398px;top:425px;" width="6" height="7" viewBox="0 0 6 7"><path d="M5 0.5v6l-4.5-3z" fill="#606060"/></svg>
<div style="position:absolute;left:407px;top:424.5px;width:184.5px;height:7px;background:#6e6e6e;border-radius:3.5px"></div>
<svg style="position:absolute;left:619px;top:425px;" width="6" height="7" viewBox="0 0 6 7"><path d="M0.7 0.5v6l4.5-3z" fill="#606060"/></svg>
<div style="position:absolute;left:1px;top:438px;width:639px;height:14px;background:#f3f3f3"></div>
<div class="t" style="left:5.42px;top:441.77px;font-size:7.3px;line-height:8.39px;color:#333;font-weight:normal;letter-spacing:-0.023px;">Blatt 1 von 1</div>
<div class="t" style="left:55.00px;top:441.77px;font-size:7.3px;line-height:8.39px;color:#333;font-weight:normal;letter-spacing:0.084px;">Arbeitsmappenstatistiken</div>
<svg style="position:absolute;left:150.5px;top:441px;" width="11" height="9" viewBox="0 0 11 9"><rect x="0.6" y="0.6" width="8.4" height="6.8" fill="none" stroke="#555" stroke-width="0.9"/><rect x="0.6" y="0.6" width="8.4" height="2" fill="#555"/><circle cx="7.4" cy="6.2" r="2.4" fill="#555"/><circle cx="7.4" cy="6.2" r="0.9" fill="#f3f3f3"/></svg>
<svg style="position:absolute;left:170.5px;top:440.5px;" width="12" height="10" viewBox="0 0 12 10"><circle cx="4.2" cy="1.6" r="1.2" fill="none" stroke="#555" stroke-width="0.8"/><path d="M0.6 3.6h7.2M4.2 3.6v2.6M4.2 6.2l-2 2.8M4.2 6.2l1.2 1.6" fill="none" stroke="#555" stroke-width="0.85"/><path d="M6.2 7.6l1.3 1.3 2.6-3" fill="none" stroke="#555" stroke-width="0.85"/></svg>
<div class="t" style="left:181.42px;top:441.77px;font-size:7.3px;line-height:8.39px;color:#333;font-weight:normal;letter-spacing:-0.031px;">Barrierefreiheit: Keine Probleme</div>
<svg style="position:absolute;left:348px;top:440px;" width="11" height="10" viewBox="0 0 11 10"><rect x="0.5" y="0.5" width="8.5" height="6" fill="none" stroke="#444" stroke-width="0.9"/><path d="M3 8.5h3" stroke="#444"/><circle cx="8" cy="6.5" r="2.7" fill="#444"/><circle cx="8" cy="6.5" r="1" fill="#f3f3f3"/></svg>
<div class="t" style="left:360.00px;top:441.77px;font-size:7.3px;line-height:8.39px;color:#333;font-weight:normal;letter-spacing:0.089px;">Anzeigeeinstellungen</div>
<svg style="position:absolute;left:450px;top:440px;" width="11" height="10" viewBox="0 0 11 10"><rect x="0.5" y="0.5" width="9" height="8.5" fill="none" stroke="#c4c4c4"/><path d="M0.5 3.5h9M0.5 6.5h9M3.5 0.5v8.5M6.5 0.5v8.5" stroke="#c4c4c4" stroke-width="0.7"/></svg>
<svg style="position:absolute;left:476px;top:440px;" width="11" height="10" viewBox="0 0 11 10"><rect x="0.5" y="0.5" width="9" height="8.5" fill="none" stroke="#c4c4c4"/><rect x="2.5" y="2" width="5" height="5.5" fill="none" stroke="#c4c4c4" stroke-width="0.7"/></svg>
<svg style="position:absolute;left:501px;top:440px;" width="11" height="10" viewBox="0 0 11 10"><rect x="0.5" y="0.5" width="9" height="8.5" fill="none" stroke="#c4c4c4"/><path d="M0.5 5.5h4v-5" fill="none" stroke="#c4c4c4" stroke-width="0.8"/></svg>
<div style="position:absolute;left:524.5px;top:445px;width:4px;height:0.8px;background:#c4c4c4"></div>
<div style="position:absolute;left:531px;top:445px;width:63px;height:0.8px;#999;background:#9a9a9a"></div>
<div style="position:absolute;left:562px;top:443.5px;width:1.5px;height:3.5px;background:#666"></div>
<svg style="position:absolute;left:596px;top:442px;" width="6" height="6" viewBox="0 0 6 6"><path d="M3 0v6M0 3h6" stroke="#c4c4c4" stroke-width="0.8"/></svg>
<div class="t" style="left:610.48px;top:441.55px;font-size:7px;line-height:8.05px;color:#bdbdbd;font-weight:normal;">130%</div>
<div style="position:absolute;left:0px;top:31px;width:1px;height:422px;background:#5f8c7c"></div>
<div style="position:absolute;left:1px;top:31px;width:1px;height:421px;background:rgba(200,235,225,0.55)"></div>
<div style="position:absolute;left:0px;top:452px;width:640px;height:1px;background:#6a9a86"></div>
</body></html>
